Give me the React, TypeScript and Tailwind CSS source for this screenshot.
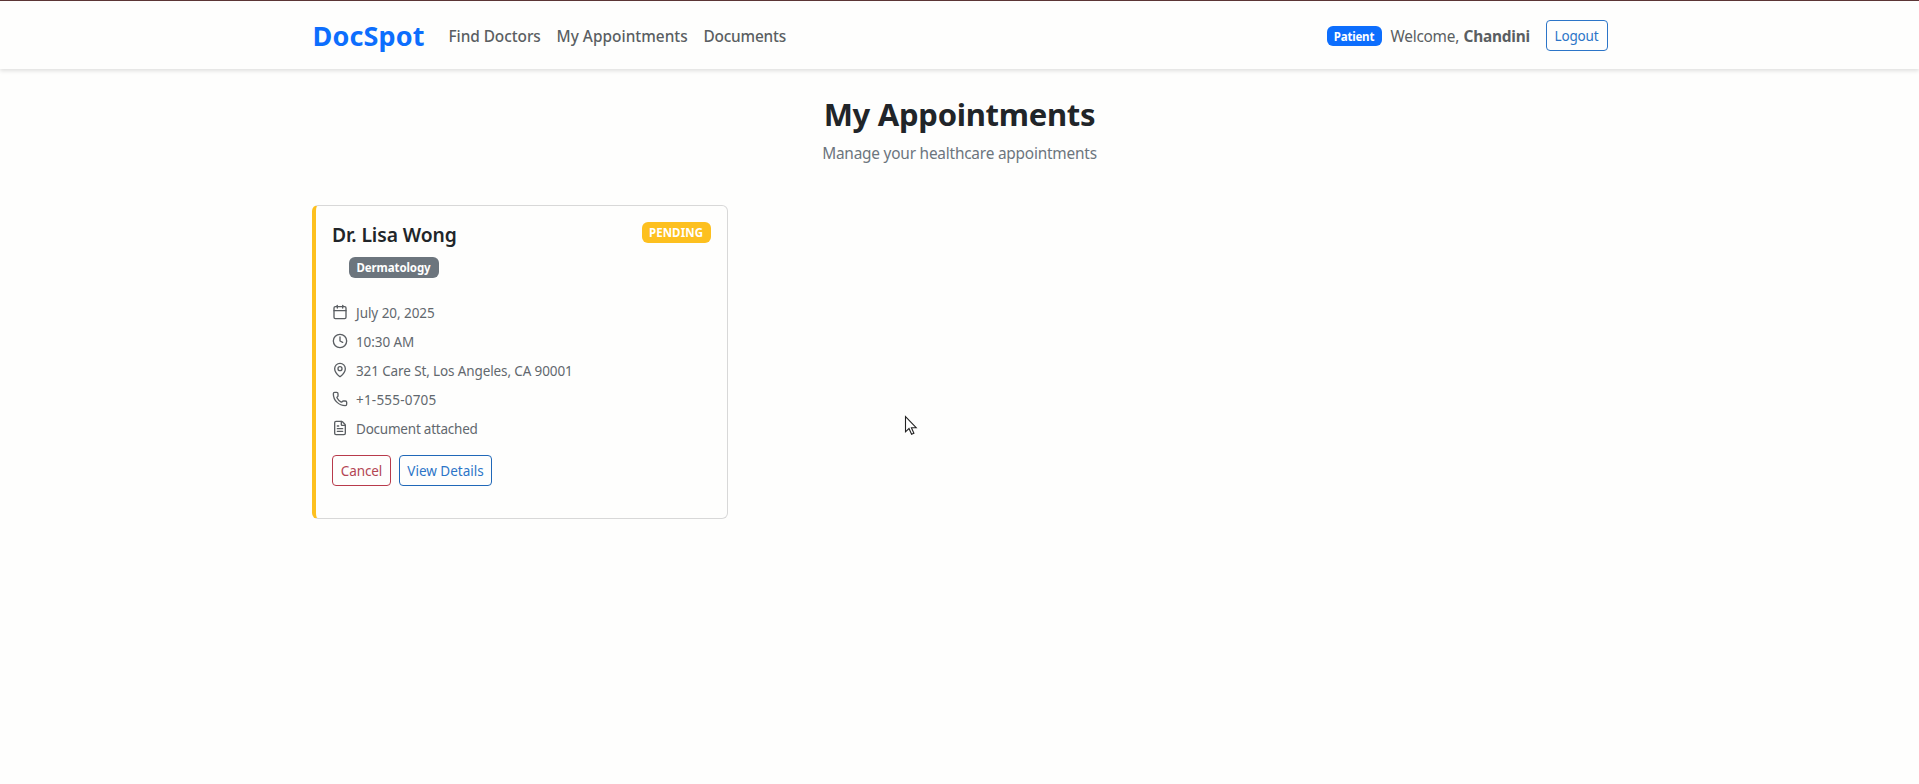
import { Calendar, Clock, MapPin, Phone, FileText } from "lucide-react";

const details = [
  { Icon: Calendar, text: "July 20, 2025", tracking: "tracking-[-0.05px]" },
  { Icon: Clock, text: "10:30 AM", tracking: "tracking-[-0.1px]" },
  { Icon: MapPin, text: "321 Care St, Los Angeles, CA 90001", tracking: "tracking-[-0.12px]" },
  { Icon: Phone, text: "+1-555-0705", tracking: "tracking-[0.2px]" },
  { Icon: FileText, text: "Document attached", tracking: "tracking-[-0.22px]" },
];

function Header() {
  return (
    <header className="h-[69px] border-t border-[#5b3535] bg-[#fefefd] shadow-[0_2px_4px_rgba(0,0,0,0.12)]">
      <div className="mx-auto flex h-[69px] w-[1296px] items-center whitespace-nowrap">
        <a className="w-[137px] pl-[1px] text-[27px] leading-[42px] font-bold tracking-[0.15px] text-[#0d6efd]">DocSpot</a>
        <nav className="flex items-center pt-[2px] text-[15.4px] leading-6 font-medium text-[#5a5e62]">
          <a className="w-[108px] tracking-[-0.06px]">Find Doctors</a>
          <a className="w-[147px] tracking-[0.02px]">My Appointments</a>
          <a className="tracking-[-0.2px]">Documents</a>
        </nav>
        <div className="ml-auto flex items-center">
          <span className="mr-[9px] mt-px flex h-[20px] w-[55px] items-center justify-center rounded-md bg-[#0d6efd] pt-px text-[11.5px] font-bold text-white tracking-[-0.2px]">Patient</span>
          <span className="w-[155px] pt-[2px] text-[15.4px] leading-6 text-[#5a5e62]">
            <span className="inline-block w-[73px] tracking-[-0.25px]">Welcome,</span>
            <b className="tracking-[-0.2px]">Chandini</b>
          </span>
          <button className="h-[31px] w-[62px] rounded border border-[#2c75c8] pt-px text-[13.5px] leading-[21px] tracking-[-0.15px] text-[#2c75c8]">Logout</button>
        </div>
      </div>
    </header>
  );
}

function AppointmentCard() {
  return (
    <article className="h-[314px] w-[416px] overflow-hidden rounded-md border border-l-4 border-[#d8d8d8] border-l-[#fdc01f] pt-4 pl-[16.5px] pr-4 whitespace-nowrap">
      <div className="flex items-start justify-between">
        <h5 className="pt-px text-[19.3px] leading-6 font-semibold tracking-[-0.08px] text-[#212529]">Dr. Lisa Wong</h5>
        <span className="flex h-[21px] w-[69px] items-center justify-center rounded-md bg-[#fdc01f] pt-px text-[11.5px] font-bold text-white tracking-[0.1px]">PENDING</span>
      </div>
      <span className="mt-[10px] ml-[16.5px] flex h-[21px] w-[90px] items-center justify-center rounded-md bg-[#6c757d] text-[11.5px] font-bold text-white tracking-[-0.1px]">Dermatology</span>
      <ul className="mt-[24px] text-[13.5px] text-[#62686e]">
        {details.map(({ Icon, text, tracking }) => (
          <li key={text} className="mb-2 flex h-[21px] items-center">
            <Icon size={16} strokeWidth={2} className="mr-[8px] mb-[1.5px] shrink-0 text-[#5a5e62]" />
            <span className={`pt-[2px] ${tracking}`}>{text}</span>
          </li>
        ))}
      </ul>
      <div className="mt-4 flex gap-2 text-[13.5px] leading-[21px]">
        <button className="h-[31px] w-[59px] rounded border border-[#b83a4b] pt-px text-[#b34553] tracking-[-0.1px]">Cancel</button>
        <button className="h-[31px] w-[93px] rounded border border-[#2068b8] pt-px text-[#2c75c8]">View Details</button>
      </div>
    </article>
  );
}

export default function App() {
  return (
    <div className="relative min-h-[784px] bg-[#fefefd] font-['Noto_Sans','Open_Sans',sans-serif]">
      <Header />
      <main className="mx-auto w-[1296px] pt-[26px]">
        <div className="h-[110px] text-center">
          <h1 className="text-[31px] leading-[38px] font-bold tracking-[-0.27px] text-[#212529]">My Appointments</h1>
          <p className="mt-[9px] text-[15.4px] leading-6 tracking-[-0.21px] text-[#6c757d]">Manage your healthcare appointments</p>
        </div>
        <AppointmentCard />
      </main>
      <svg className="absolute top-[415px] left-[904px]" width="14" height="22" viewBox="0 0 14 22" aria-hidden="true">
        <path d="M1.5 1.5v15.3l3.5-3.3 2.6 5.8 2.3-1-2.5-5.6h4.8z" fill="#fff" stroke="#222" strokeWidth="1.1" />
      </svg>
    </div>
  );
}
